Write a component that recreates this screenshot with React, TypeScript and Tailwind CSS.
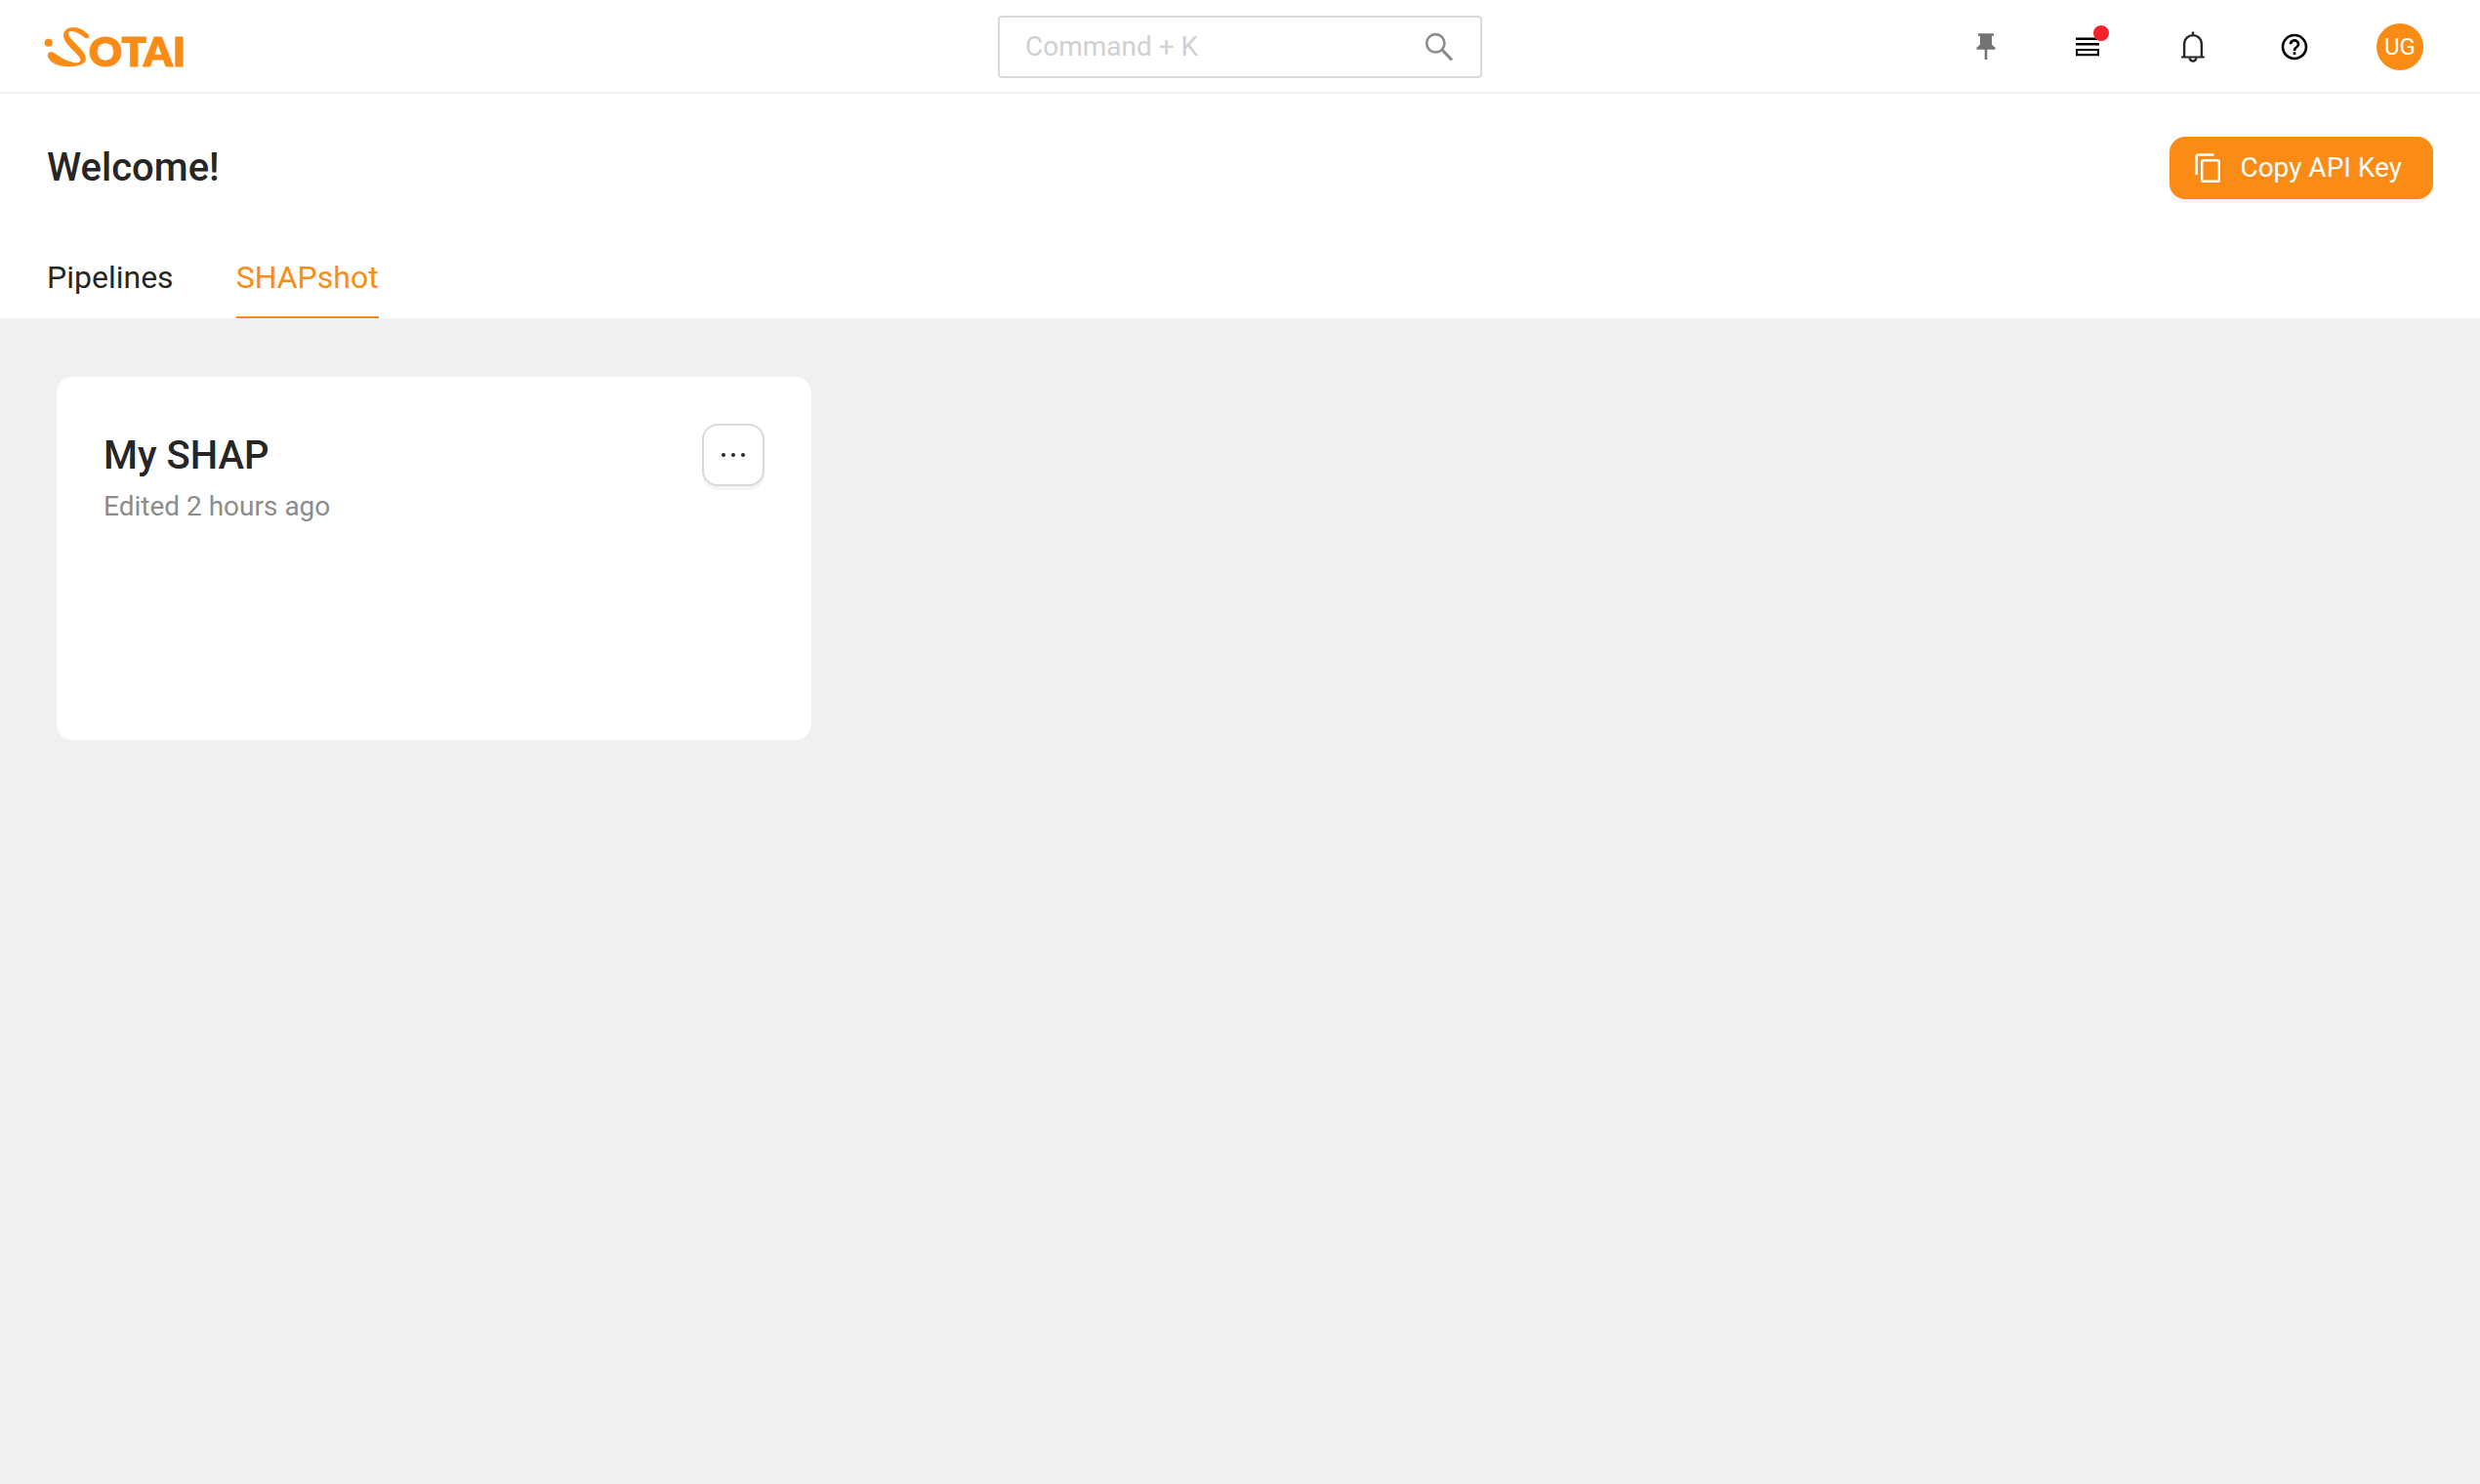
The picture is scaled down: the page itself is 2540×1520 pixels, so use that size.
import { useState } from 'react';
import { MdHelpOutline } from 'react-icons/md';

const tabs = ['Pipelines', 'SHAPshot'];

const snapshots = [{ id: 'my-shap', name: 'My SHAP', edited: 'Edited 2 hours ago' }];

function Logo() {
  return (
    <svg width="160" height="46" viewBox="0 0 160 46" className="overflow-visible text-[#fa8c16]" fill="currentColor" role="img" aria-label="Sotai">
      <circle cx="5.7" cy="18.7" r="4" />
      <path d="M46.500 10.500C43 6.500 37 3 31 3C25.500 3 21 6 21 11.500C21 17 28 23.500 32.700 28.300C36 31.800 38.800 34.500 38.300 37C37.800 39 36 39.500 33.500 39.300C27 38.700 20 35 16 32.300C13.500 30.700 11 28.600 8.700 28.300C5.500 28 4 30.800 5.300 34C7.500 38.800 15 43.300 26 43.300C36 43.300 44 40.500 43.900 35C43.800 30.500 39.500 26 36 22.300C32.500 18.500 29.500 16 27.700 13.300C25.500 10 25.300 7.500 28.700 7C32.500 6.600 38.500 10 42.500 13.500C45 15.500 48.500 13 46.500 10.500Z" />
      <text x="47" y="43" fontFamily="Lato, sans-serif" fontWeight="800" fontSize="42" stroke="currentColor" strokeWidth="1" strokeLinejoin="round">
        OTAI
      </text>
    </svg>
  );
}

function SearchIcon() {
  return (
    <svg width="32" height="32" viewBox="0 0 32 32" fill="none" stroke="#8c8c8c">
      <circle cx="12.300" cy="12.300" r="9.200" strokeWidth="2.600" />
      <path d="M18.500 18.500L29 29.500" strokeWidth="3.200" />
    </svg>
  );
}

function PinIcon() {
  return (
    <svg width="32" height="32" viewBox="0 0 32 32" fill="#737373">
      <path d="M8 2.300H24V4.800H22V13.200Q22.500 15.200 25.400 16.200V18.800H17.300V29H14.700V18.800H6.600V16.200Q9.500 15.200 10 13.200V4.800H8Z" />
    </svg>
  );
}

function ListIcon() {
  return (
    <svg width="32" height="32" viewBox="0 0 32 32" fill="none" stroke="#000">
      <path d="M4 7.800H28M4 13.200H28" strokeWidth="2.400" />
      <path d="M5.100 19H26.900V24.200H5.100Z" strokeWidth="2.200" />
    </svg>
  );
}

function BellIcon() {
  return (
    <svg width="32" height="32" viewBox="0 0 32 32" fill="none" stroke="#262626" strokeWidth="2.400" className="overflow-visible">
      <path d="M5 26.500H27" strokeLinecap="round" strokeWidth="2.200" />
      <path d="M7.100 26V13A8.900 8.900 0 0 1 24.900 13V26" />
      <path d="M16 0.500V4M12.700 27.300A3.300 3.300 0 0 0 19.300 27.300" />
    </svg>
  );
}

function CopyIcon() {
  return (
    <svg width="32" height="32" viewBox="0 0 32 32" fill="none" stroke="currentColor" strokeWidth="2.400">
      <rect x="9.200" y="8.200" width="17.600" height="21.600" rx="1.600" />
      <path d="M3.700 23V4A1.500 1.500 0 0 1 5.200 2.500H21.500" />
    </svg>
  );
}

export default function App() {
  const [activeTab, setActiveTab] = useState('SHAPshot');
  const [query, setQuery] = useState('');

  return (
    <div className="flex min-h-screen flex-col bg-[#f0f0f0] font-[Roboto,sans-serif] text-[#262626]">
      <header className="grid h-24 grid-cols-[1fr_496px_1fr] items-center bg-white shadow-[inset_0_-2px_0_#f0f0f0]">
        <a href="#" className="justify-self-start pl-11">
          <Logo />
        </a>

        <label className="flex h-16 items-center rounded-sm border-2 border-[#d9d9d9] px-[26px]">
          <input
            type="text"
            aria-label="Search"
            placeholder="Command + K"
            value={query}
            onChange={(e) => setQuery(e.target.value)}
            className="min-w-0 flex-1 text-[28px] outline-none placeholder:text-[#d0d0d0]"
          />
          <SearchIcon />
        </label>

        <nav className="flex items-center justify-end gap-16 pr-[58px]">
          <button aria-label="Pin"><PinIcon /></button>
          <button aria-label="Tasks" className="relative flex w-12 justify-center">
            <ListIcon />
            <span className="absolute -top-1.5 right-0.5 h-4 w-4 rounded-full bg-[#f5222d]" />
          </button>
          <button aria-label="Notifications" className="flex w-10 justify-center"><BellIcon /></button>
          <button aria-label="Help" className="flex w-10 justify-center"><MdHelpOutline className="h-8 w-8 text-black" /></button>
          <button className="flex h-12 w-12 items-center justify-center rounded-full bg-[#fa8c16] text-2xl text-white">UG</button>
        </nav>
      </header>

      <section className="bg-white px-12 pt-11">
        <div className="flex items-center justify-between">
          <h1 className="text-[40px] leading-[56px] font-medium">Welcome!</h1>
          <button className="flex h-16 items-center gap-4 rounded-2xl bg-[#fa8c16] pl-6 pr-8 text-[28px] text-white shadow-[0_4px_0_rgba(0,0,0,0.045)]">
            <CopyIcon />
            Copy API Key
          </button>
        </div>
        <div role="tablist" className="mt-9 flex gap-16">
          {tabs.map((tab) => (
            <button
              key={tab}
              role="tab"
              aria-selected={activeTab === tab}
              onClick={() => setActiveTab(tab)}
              className={`border-b-2 pt-6 pb-5 text-[32px] leading-10 ${activeTab === tab ? 'border-[#fa8c16] text-[#fa8c16]' : 'border-transparent'}`}
            >
              {tab}
            </button>
          ))}
        </div>
      </section>

      <main className="grid grid-cols-3 gap-13 px-[58px] py-[60px]">
        {snapshots.map((item) => (
          <article key={item.id} className="flex h-[372px] items-start justify-between rounded-2xl bg-white p-12">
            <div>
              <h2 className="text-[40px] leading-[66px] font-medium">{item.name}</h2>
              <p className="text-[28px] leading-[38px] text-[#8c8c8c]">{item.edited}</p>
            </div>
            <button
              aria-label="More actions"
              className="flex h-16 w-16 items-center justify-center rounded-2xl border-2 border-[#d9d9d9] bg-white shadow-[0_4px_0_rgba(0,0,0,0.045)]"
            >
              <svg width="28" height="28" viewBox="0 0 28 28" fill="#262626">
                <circle cx="4" cy="14" r="2" />
                <circle cx="14" cy="14" r="2" />
                <circle cx="24" cy="14" r="2" />
              </svg>
            </button>
          </article>
        ))}
      </main>
    </div>
  );
}
